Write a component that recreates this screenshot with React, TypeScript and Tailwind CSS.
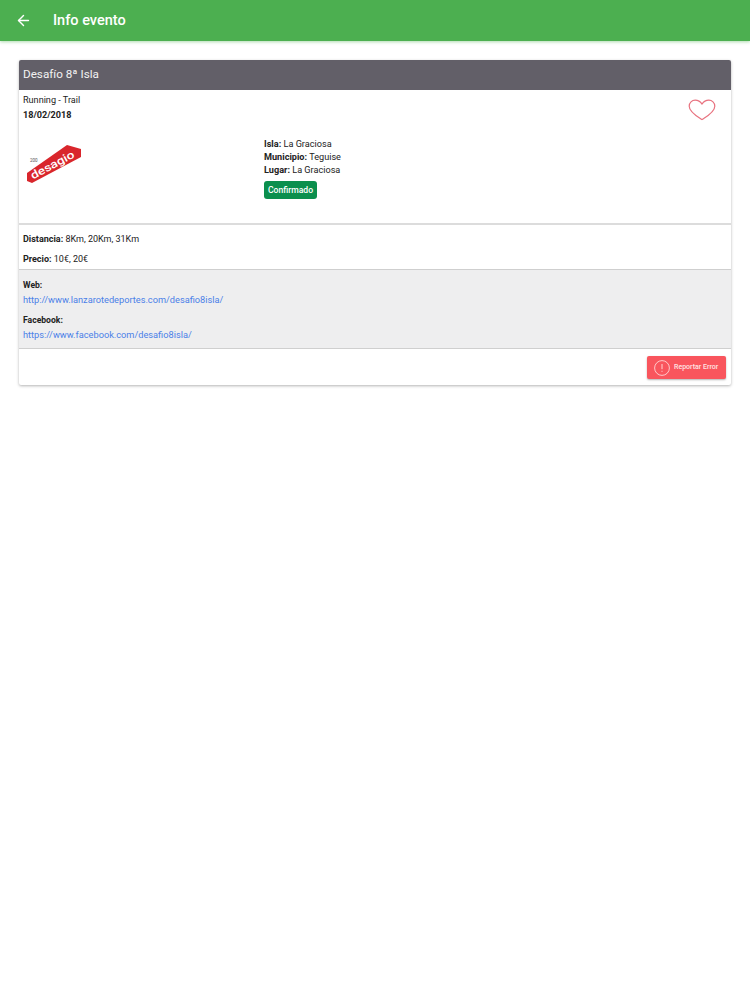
import { ArrowLeft } from 'lucide-react';

function Logo() {
  return (
    <svg width="56" height="40" viewBox="0 0 56 40" className="block">
      <polygon points="0,28 40,0 54,4 54,12 5,38 0,36" fill="#d9262c" />
      <text x="3" y="17" fontSize="4.500" fill="#555" fontFamily="Roboto, sans-serif">200</text>
      <text x="6" y="34.500" fontSize="11" fontWeight="500" fill="#fff" fontFamily="Roboto, sans-serif" textLength="48" lengthAdjust="spacingAndGlyphs" transform="rotate(-28 6 34.500)">desagio</text>
    </svg>
  );
}

function Heart() {
  return (
    <svg width="28" height="22" viewBox="0 0 28 22" fill="none" className="block">
      <path
        d="M14 20.6C9.5 17.6 1.2 13 1.2 7.2 1.2 3.6 4 1.2 7.2 1.2c2.8 0 5.2 1.5 6.8 3.9 1.6-2.4 4-3.9 6.8-3.9 3.2 0 6 2.4 6 6 0 5.8-8.300 10.400-12.800 13.400Z"
        stroke="#e8727f"
        strokeWidth="1.2"
        strokeLinejoin="round"
      />
    </svg>
  );
}

function AlertIcon() {
  return (
    <svg width="16" height="16" viewBox="0 0 16 16" fill="none" className="block">
      <circle cx="8" cy="8" r="7.400" stroke="#ffd5d5" strokeWidth="0.9" />
      <path d="M8 4v5.200M8 10.800v1" stroke="#ffd5d5" strokeWidth="1" />
    </svg>
  );
}

export default function App() {
  return (
    <div className="min-h-[1000px] bg-white font-['Roboto',sans-serif] text-[#222]">
      <header className="flex h-[41px] items-center bg-[#4caf50] pl-[15px] text-white shadow-[0_1px_3px_rgba(76,175,80,0.45)]">
        <ArrowLeft className="h-[17px] w-[17px]" strokeWidth={2} />
        <span className="ml-[21px] text-[14.500px] font-medium">Info evento</span>
      </header>

      <main className="px-[19px] pt-[19px]">
        <div className="rounded-[2px] bg-white shadow-[0_1px_3px_rgba(0,0,0,0.3)]">
          <div className="flex h-[30px] items-center rounded-t-[2px] bg-[#625f68] px-[4px] text-[11.700px] text-[#f2f2f2]">
            Desafío 8ª Isla
          </div>

          <div className="flex h-[135px] flex-col border-b-2 border-[#dcdcdc] pl-[4px] pr-[15px]">
            <div className="flex justify-between">
              <div className="pt-[4px]">
                <p className="text-[9.100px] leading-[12px]">Running - Trail</p>
                <p className="mt-[3px] text-[9.100px] font-bold leading-[12px]">18/02/2018</p>
              </div>
              <div className="pt-[9px]">
                <Heart />
              </div>
            </div>
            <div className="mt-[17px] flex">
              <div className="w-[241px] pl-[4px] pt-[7px]">
                <Logo />
              </div>
              <div className="text-[9.150px] leading-[13px]">
                <p><b>Isla:</b> La Graciosa</p>
                <p><b>Municipio:</b> Teguise</p>
                <p><b>Lugar:</b> La Graciosa</p>
                <span className="mt-[4px] flex h-[18px] w-[53px] items-center justify-center rounded-[3px] bg-[#0b8f4d] text-[8.600px] font-medium text-white">
                  Confirmado
                </span>
              </div>
            </div>
          </div>

          <div className="flex h-[45px] flex-col border-b border-[#cfcfcf] px-[4px] pt-[8px] text-[9px] leading-[12px]">
            <p><b>Distancia:</b> 8Km, 20Km, 31Km</p>
            <p className="mt-[8px]"><b>Precio:</b> 10€, 20€</p>
          </div>

          <div className="h-[79px] border-b border-[#cfcfcf] bg-[#eeeeef] px-[4px] pt-[9px] leading-[12px]">
            <p className="text-[8.600px] font-bold">Web:</p>
            <a className="mt-[3px] block text-[9.220px] text-[#4a80e8]">http://www.lanzarotedeportes.com/desafio8isla/</a>
            <p className="mt-[8px] text-[8.600px] font-bold">Facebook:</p>
            <a className="mt-[3px] block text-[9.220px] text-[#4a80e8]">https://www.facebook.com/desafio8isla/</a>
          </div>

          <div className="flex h-[36px] items-start justify-end px-[5px] pt-[7px]">
            <button className="flex h-[23px] w-[79px] items-center gap-[4px] rounded-[2px] bg-[#f9555d] pl-[7px] text-[7px] font-medium text-[#ffe3e3] shadow-[0_1px_2px_rgba(0,0,0,0.3)]">
              <AlertIcon />
              Reportar Error
            </button>
          </div>
        </div>
      </main>
    </div>
  );
}
